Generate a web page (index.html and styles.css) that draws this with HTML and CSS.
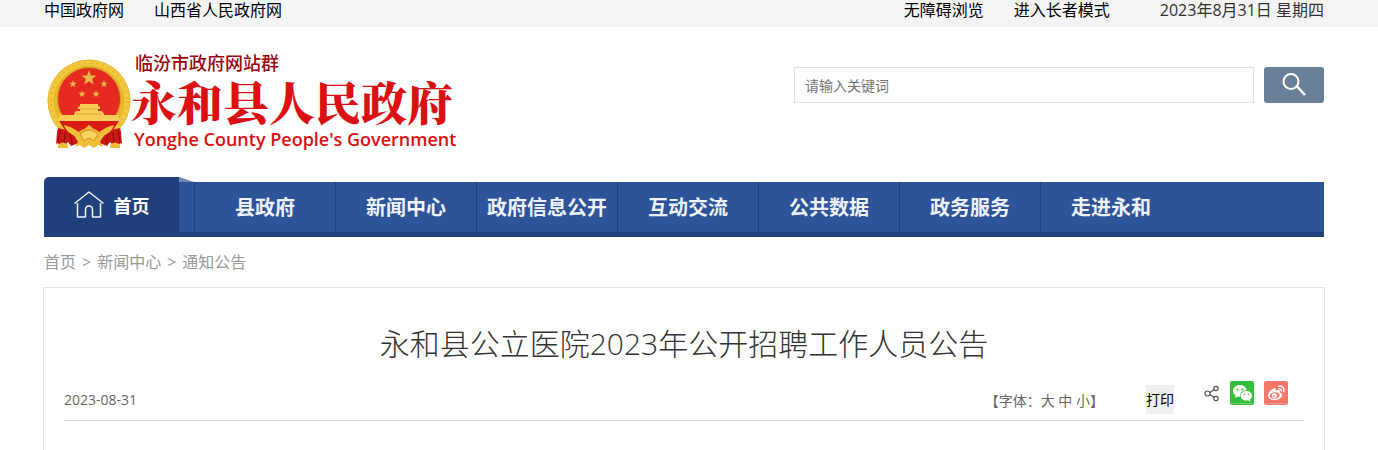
FILE: index.html
```html
<!DOCTYPE html>
<html lang="zh-CN">
<head>
    <meta charset="UTF-8">
    <meta name="viewport" content="width=device-width, initial-scale=1.0">
    <title>永和县公立医院2023年公开招聘工作人员公告</title>
    <link rel="stylesheet" href="styles.css">
</head>
<body>

<div class="top-bar">
    <div class="wrap top-inner">
        <a href="#">中国政府网</a>
        <a href="#">山西省人民政府网</a>
        <div class="top-right">
            <a href="#">无障碍浏览</a>
            <a href="#">进入长者模式</a>
            <span class="today">2023年8月31日 星期四</span>
        </div>
    </div>
</div>

<header class="wrap header">
    <a href="#" class="logo">
        <svg class="emblem" viewBox="0 0 84 90" width="84" height="90" aria-hidden="true">
            <defs>
                <path id="star" d="M0-10 2.4-3.2 9.5-3.1 3.8 1.2 5.9 8.1 0 4-5.9 8.1-3.8 1.2-9.5-3.1-2.4-3.2z"/>
            </defs>
            <circle cx="42" cy="42" r="41.5" fill="#e8b62c"/>
            <circle cx="42" cy="42" r="38" fill="none" stroke="#f3c93e" stroke-width="5"/>
            <circle cx="42" cy="42" r="38" fill="none" stroke="#e6b530" stroke-width="2" stroke-dasharray="2 4"/>
            <circle cx="42" cy="40" r="31.5" fill="#e62a20" stroke="#d59a20"/>
            <g fill="#e9b94b">
                <use href="#star" transform="translate(42 19) scale(.8)"/>
                <use href="#star" transform="translate(26 25) scale(.4)"/>
                <use href="#star" transform="translate(57 25) scale(.4)"/>
                <use href="#star" transform="translate(35 35) scale(.38)"/>
                <use href="#star" transform="translate(49 35) scale(.38)"/>
            </g>
            <path d="M31 48l2-1v-2h18v2l2 1v2h-2v2h4l2 3v1h14l2 6H11l2-6h14v-1l2-3h4v-2h-2z" fill="#f8cd56"/>
            <path d="M33 50h18M29 55h26" stroke="#e0a438" fill="none"/>
            <path d="M12 62h60l-6 9-12 3-12-8-12 8-12-3z" fill="#d91b17"/>
            <path d="M11 69l13 3 8 12-8 3-3-4-5 5-6-4-1 2 1-13zM73 69l-13 3-8 12 8 3 3-4 5 5 6-4 1 2-1-13z" fill="#cb1715"/>
            <path d="M13 71l-2 12M18 73l-1 11M23 73l2 12M71 71l2 12M66 73l1 11M61 73l-2 12" stroke="#8e0c0d" fill="none"/>
            <path d="M17 66c8 2 12 5 16 8l9-8 9 8c4-3 8-6 16-8-2 7-8 10-16 13l5 9-5-2-4 3-5-3-5 3-4-3-5 2 5-9c-8-3-14-6-16-13z" fill="#efbd36"/>
            <path d="M33 75q9-8 18 0l-4 7q-5-5-10 0z" fill="#f7d45d" stroke="#cf8d20"/>
            <path d="M11 86q5-5 10 0v3H11zM63 86q5-5 10 0v3H63z" fill="#efbd36"/>
        </svg>
        <span class="logo-text">
            <span class="logo-group">临汾市政府网站群</span>
            <span class="logo-name">永和县人民政府</span>
            <span class="logo-en">Yonghe County People's Government</span>
        </span>
    </a>
    <form class="search">
        <input type="text" placeholder="请输入关键词" aria-label="请输入关键词">
        <button type="button" aria-label="搜索">
            <svg viewBox="0 0 24 26" width="24" height="26" fill="none" stroke="#fff" stroke-width="2">
                <circle cx="9" cy="9.500" r="7.500"/>
                <path d="M14 15l1-.5 8 8.500" stroke-width="2.500"/>
            </svg>
        </button>
    </form>
</header>

<nav class="wrap nav">
    <a href="#" class="home">
        <svg viewBox="0 0 30 27" width="30" height="27" fill="none" stroke="#eef3fb" stroke-width="1.500">
            <path d="M.5 12.500L15 1l14.500 11.500M3.500 12v14h8v-7q0-4 3.500-4t3.500 4v7h8V12" stroke-linejoin="round"/>
        </svg>
        首页
    </a>
    <ul>
        <li><a href="#">县政府</a></li>
        <li><a href="#">新闻中心</a></li>
        <li><a href="#">政府信息公开</a></li>
        <li><a href="#">互动交流</a></li>
        <li><a href="#">公共数据</a></li>
        <li><a href="#">政务服务</a></li>
        <li><a href="#">走进永和</a></li>
    </ul>
</nav>

<div class="wrap crumbs">
    <a href="#">首页</a><span>&gt;</span><a href="#">新闻中心</a><span>&gt;</span><a href="#">通知公告</a>
</div>

<div class="wrap">
    <main class="article">
        <h1>永和县公立医院2023年公开招聘工作人员公告</h1>
        <div class="info">
            <span class="date">2023-08-31</span>
            <div class="font-size">【字体：<a href="#">大</a> <a href="#">中</a> <a href="#">小</a>】</div>
            <button type="button" class="print">打印</button>
            <div class="share">
                <a href="#" aria-label="分享">
                    <svg viewBox="0 0 16 24" width="16" height="24" fill="none" stroke="#555" stroke-width="1.200">
                        <circle cx="3.500" cy="12.500" r="2.500"/>
                        <circle cx="12" cy="7.500" r="2.200"/>
                        <circle cx="12" cy="17.500" r="2.200"/>
                        <path d="M6 11.500l4-3M6 13.500l4 3"/>
                    </svg>
                </a>
                <a href="#" aria-label="微信">
                    <svg viewBox="0 0 24 24" width="24" height="24">
                        <rect width="24" height="24" rx="2" fill="#36bd3c"/>
                        <path d="M1 22.500h22" stroke="#6bd06e"/>
                        <path d="M10 4C5.800 4 3 6.500 3 9.800c0 2 1 3.500 2.600 4.600L5 17l2.800-1.500 2.500.4C9.600 11.600 13 9 16.800 9 16 6 13.500 4 10 4z" fill="#fff"/>
                        <path d="M16.400 10c-3.300 0-5.700 2.100-5.700 4.800s2.400 4.800 5.700 4.800l1.800-.3 2.300 1.300-.6-2.200c1.300-.9 2.100-2.100 2.100-3.600 0-2.700-2.400-4.800-5.600-4.800z" fill="#fff"/>
                        <g fill="#36bd3c">
                            <circle cx="7.500" cy="8.500" r="1"/>
                            <circle cx="12" cy="8.500" r="1"/>
                            <circle cx="14.500" cy="13.300" r=".8"/>
                            <circle cx="18.400" cy="13.300" r=".8"/>
                        </g>
                    </svg>
                </a>
                <a href="#" aria-label="微博">
                    <svg viewBox="0 0 24 24" width="24" height="24">
                        <rect width="24" height="24" rx="2" fill="#f67769"/>
                        <path d="M1 22.500h22" stroke="#fa9b90"/>
                        <path d="M9.500 7.500c1.600-.6 2.600.2 2.200 2 2-.8 4-.8 4.300.5.100.5 0 1-.2 1.500 1.500.4 2.500 1.300 2.500 2.600 0 2.700-3.700 5-7.800 5S4 17.200 4 14.600c0-2.800 3-6.200 5.500-7.100z" fill="#fff"/>
                        <ellipse cx="10.700" cy="14.500" rx="5" ry="3.300" transform="rotate(-8 10.700 14.500)" fill="#f67769"/>
                        <circle cx="10.300" cy="14.700" r="2.500" fill="#fff"/>
                        <circle cx="9.600" cy="15.200" r="1" fill="#f67769"/>
                        <path d="M14.500 5.300c3.500-1 6.300 1.500 5.400 5.200M15 8c1.600-.4 2.700.5 2.300 2" fill="none" stroke="#fff" stroke-width="1.400" stroke-linecap="round"/>
                    </svg>
                </a>
            </div>
        </div>
    </main>
</div>

</body>
</html>
```
FILE: styles.css
```css
* {
    box-sizing: border-box;
}
body {
    margin: 0;
    font-family: "Open Sans", "Noto Sans CJK SC", sans-serif;
    font-size: 16px;
    background: #fff;
    color: #333;
}
a {
    color: inherit;
    text-decoration: none;
}
button, input {
    font-family: inherit;
    font-size: 14px;
}
svg {
    display: block;
}
.wrap {
    padding: 0 54px 0 44px;
}

/* top bar */
.top-bar {
    background: #f4f4f4;
}
.top-inner {
    display: flex;
    gap: 30px;
    height: 27px;
    line-height: 20px;
    color: #000;
}
.top-right {
    display: flex;
    gap: 30px;
    margin-left: auto;
}
.today {
    margin-left: 20px;
    color: #333;
}

/* header */
.header {
    display: flex;
    justify-content: space-between;
    align-items: flex-start;
    height: 150px;
}
.logo {
    display: flex;
    padding: 26px 0 0 3px;
}
.emblem {
    margin-top: 6px;
}
.logo-text {
    display: flex;
    flex-direction: column;
    color: #dc0f12;
    white-space: nowrap;
}
.logo-group {
    padding-left: 4px;
    font-size: 18px;
    font-weight: 500;
    line-height: 20px;
    color: #9c0508;
}
.logo-name {
    font-family: "Noto Serif CJK SC", "Noto Sans CJK SC", serif;
    font-size: 46px;
    font-weight: 900;
    line-height: 54px;
}
.logo-en {
    padding-left: 3px;
    font-size: 18px;
    font-weight: 600;
    line-height: 24px;
}
.search {
    display: flex;
    gap: 10px;
    margin-top: 40px;
}
.search input {
    width: 460px;
    height: 36px;
    padding: 0 10px;
    border: 1px solid #e2e2e2;
    background: #fff;
}
.search input::placeholder {
    color: #757575;
}
.search button {
    display: flex;
    justify-content: center;
    width: 60px;
    height: 36px;
    padding: 5px 0;
    border: none;
    border-radius: 3px;
    background: #688098;
    cursor: pointer;
}

/* navigation */
.nav {
    display: flex;
    align-items: flex-end;
    font-weight: bold;
}
.home {
    position: relative;
    display: flex;
    align-items: center;
    justify-content: center;
    gap: 10px;
    width: 135px;
    height: 60px;
    padding-bottom: 5px;
    border-radius: 5px 0 0 0;
    background: #20407c;
    color: #fff;
    font-size: 18px;
}
/* folded corner next to the active tab */
.home::after {
    content: "";
    position: absolute;
    left: 100%;
    top: 0;
    border-left: 15px solid #7187b4;
    border-top: 5px solid transparent;
}
.nav ul {
    display: flex;
    flex: 1;
    height: 55px;
    margin: 0;
    padding: 0 0 0 15px;
    list-style: none;
    border-bottom: 5px solid #20407c;
    background: #2d5399;
}
.nav li {
    width: 141px;
    border-left: 1px solid #20407c;
    color: #edf2fd;
    font-size: 20px;
    line-height: 52px;
    text-align: center;
}
.nav li a {
    display: block;
}

/* breadcrumb */
.crumbs {
    display: flex;
    gap: 6px;
    height: 50px;
    line-height: 50px;
    color: #999;
}

/* article */
.article {
    margin: 0 -1px;
    padding: 32px 20px 29px;
    border: 1px solid #e4e4e4;
    border-bottom: none;
}
.article h1 {
    margin: 0;
    font-size: 30px;
    font-weight: 300;
    line-height: 48px;
    text-align: center;
}
.info {
    display: flex;
    align-items: center;
    height: 53px;
    padding: 0 16px 2px 0;
    border-bottom: 1px solid #ddd;
    color: #666;
    font-size: 14px;
}
.info .date {
    margin-right: auto;
    padding-top: 13px;
}
.font-size {
    padding-top: 13px;
}
.print {
    margin: 12px 30px 0 42px;
    padding: 0;
    height: 29px;
    border: none;
    background: #efefef;
    color: #000;
    cursor: pointer;
}
.share {
    display: flex;
    gap: 10px;
}
```
